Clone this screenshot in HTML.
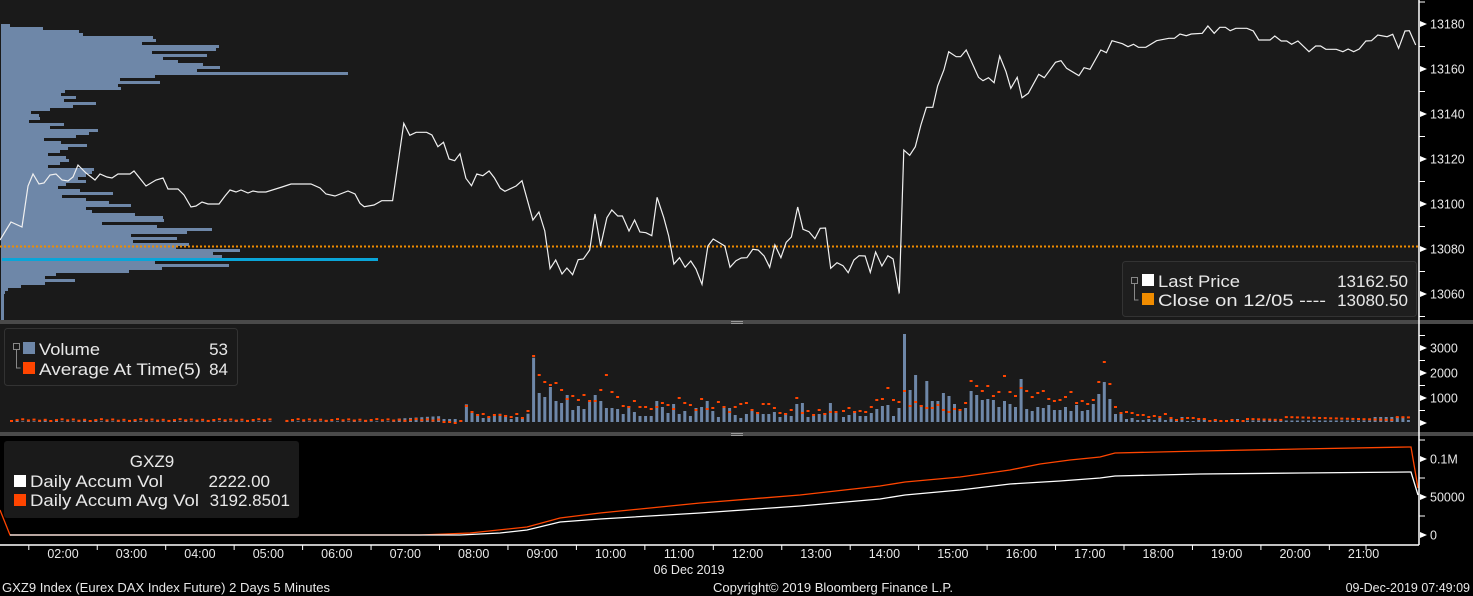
<!DOCTYPE html><html><head><meta charset="utf-8"><style>
body{margin:0;background:#000;width:1473px;height:596px;overflow:hidden;font-family:"Liberation Sans",sans-serif;color:#eee}
svg{position:absolute;left:0;top:0}
text{font-family:"Liberation Sans",sans-serif;fill:#e8e8e8}
</style></head><body>
<svg id="s" width="1473" height="596" xmlns="http://www.w3.org/2000/svg">
<rect x="0" y="0" width="1473" height="596" fill="#000"/>
<rect x="0" y="0" width="1419" height="320" fill="#1a1a1a"/>
<rect x="0" y="324" width="1419" height="108" fill="#1a1a1a"/>
<rect x="0" y="320" width="1473" height="4" fill="#4a4a4a"/>
<rect x="0" y="432" width="1473" height="4" fill="#4a4a4a"/>
<rect x="731" y="321" width="12" height="1" fill="#999"/><rect x="731" y="323" width="12" height="1" fill="#999"/>
<rect x="731" y="433" width="12" height="1" fill="#999"/><rect x="731" y="435" width="12" height="1" fill="#999"/>
<g id="hist" fill="#6e87a8"></g>
<rect x="2" y="258" width="376" height="3" fill="#0aa5d8"/>
<line x1="0" y1="246.5" x2="1419" y2="246.5" stroke="#f08c00" stroke-width="2" stroke-dasharray="2,2"/>
<path id="price" fill="none" stroke="#f0f0f0" stroke-width="1.2"/>
<g id="vol"></g>
<path id="acc1" fill="none" stroke="#ff4500" stroke-width="1.3"/>
<path id="acc2" fill="none" stroke="#ffffff" stroke-width="1.3"/>
<line x1="1419" y1="0" x2="1419" y2="545" stroke="#fff" stroke-width="1.5"/>
<line x1="0" y1="545" x2="1419" y2="545" stroke="#fff" stroke-width="1.5"/>
<g id="axes" font-size="12.5"></g>
<!-- main legend -->
<rect x="1122.5" y="261.5" width="294" height="55" rx="3" fill="#1e1e1e" stroke="#333"/>
<rect x="1131.5" y="277.5" width="6" height="6" fill="none" stroke="#888"/><path d="M1134.5 284v16h4" stroke="#888" fill="none"/>
<rect x="1142" y="274" width="12" height="12" fill="#fff"/><rect x="1142" y="293" width="12" height="12" fill="#f08c00"/>
<text x="1158" y="287" font-size="17" textLength="82" lengthAdjust="spacingAndGlyphs">Last Price</text><text x="1408" y="287" font-size="17" text-anchor="end">13162.50</text>
<text x="1158" y="306" font-size="17" textLength="168" lengthAdjust="spacingAndGlyphs">Close on 12/05 ----</text><text x="1408" y="306" font-size="17" text-anchor="end">13080.50</text>
<!-- vol legend -->
<rect x="4.5" y="328.5" width="233" height="57" rx="3" fill="#1a1a1a" stroke="#333"/>
<rect x="13.5" y="343.5" width="6" height="6" fill="none" stroke="#888"/><path d="M16.5 350v18h4" stroke="#888" fill="none"/>
<rect x="23" y="342" width="12" height="12" fill="#6e87a8"/><rect x="23" y="362" width="12" height="12" fill="#ff4500"/>
<text x="39" y="355" font-size="17" textLength="61" lengthAdjust="spacingAndGlyphs">Volume</text><text x="228" y="355" font-size="17" text-anchor="end">53</text>
<text x="39" y="375" font-size="17" textLength="162" lengthAdjust="spacingAndGlyphs">Average At Time(5)</text><text x="228" y="375" font-size="17" text-anchor="end">84</text>
<!-- accum legend -->
<rect x="4" y="441" width="295" height="77" rx="3" fill="#1a1a1a"/>
<text x="152" y="467" font-size="17" text-anchor="middle">GXZ9</text>
<rect x="14" y="475" width="12" height="12" fill="#fff"/><rect x="14" y="494" width="12" height="12" fill="#ff4500"/>
<text x="30" y="487" font-size="17" textLength="133" lengthAdjust="spacingAndGlyphs">Daily Accum Vol</text><text x="270" y="487" font-size="17" text-anchor="end">2222.00</text>
<text x="30" y="506" font-size="17" textLength="169" lengthAdjust="spacingAndGlyphs">Daily Accum Avg Vol</text><text x="290" y="506" font-size="17" text-anchor="end">3192.8501</text>
<text x="689" y="574" font-size="12.5" text-anchor="middle">06 Dec 2019</text>
<text x="2" y="592" font-size="12.5" textLength="328" lengthAdjust="spacingAndGlyphs">GXZ9 Index (Eurex DAX Index Future) 2 Days 5 Minutes</text>
<text x="713" y="592" font-size="12.5" textLength="240" lengthAdjust="spacingAndGlyphs">Copyright© 2019 Bloomberg Finance L.P.</text>
<text x="1470" y="592" font-size="12.5" text-anchor="end">09-Dec-2019 07:49:09</text>
</svg>
<script>
var NS="http://www.w3.org/2000/svg";
function el(p,t,a,txt){var e=document.createElementNS(NS,t);for(var k in a)e.setAttribute(k,a[k]);if(txt)e.textContent=txt;document.getElementById(p).appendChild(e);return e;}
var hw=[9,42,78,82,152,155,141,218,215,151,206,162,177,202,219,196,347,154,119,159,117,120,64,60,75,63,95,72,49,30,38,39,28,63,49,97,88,75,43,60,86,67,59,47,65,68,59,47,93,91,85,77,85,65,57,79,112,61,85,108,130,85,91,134,162,163,101,156,211,186,130,176,132,188,175,239,212,221,243,154,228,161,128,55,44,74,44,20,7,4];
for(var i=0;i<hw.length;i++)el("hist","rect",{x:1,y:24+i*3,width:hw[i],height:3});
el("hist","rect",{x:1,y:24,width:3,height:296});
var p=[[0,240],[11,222],[22,227],[28,186],[33,174],[39,184],[44,183],[50,175],[56,174],[62,180],[68,181],[73,177],[78,165],[86,173],[95,180],[100,174],[107,177],[112,178],[118,174],[130,174],[134,171],[146,186],[156,180],[163,178],[168,189],[178,189],[184,195],[191,207],[196,206],[202,202],[208,204],[219,204],[225,196],[230,190],[236,192],[241,190],[248,193],[253,191],[258,192],[266,192],[282,187],[291,184],[311,184],[320,188],[326,194],[335,196],[348,191],[355,194]];
var z4=[[0,280],[12,290],[40,285],[62,272],[93,272],[125,40],[142,76],[160,67],[190,67],[205,75],[222,110],[238,97],[254,147],[270,152],[285,131],[302,205],[318,227],[333,192],[350,197],[368,183],[383,203],[400,235],[413,244],[445,228],[462,212],[493,330],[510,306],[527,363],[542,476],[558,450],[576,492],[590,474],[606,494],[622,449],[637,447],[655,420],[670,312],[686,408],[704,323],[718,300],[735,318],[748,318],[767,363],[783,330],[798,366],[815,368],[832,377],[847,262],[866,323],[880,378],[895,462],[911,443],[927,472],[943,453],[958,477],[975,523],[992,408],[1007,387],[1040,408],[1055,472],[1072,452],[1087,444],[1103,443],[1120,418],[1135,420],[1152,438],[1168,472],[1183,405],[1200,443],[1215,397],[1230,381],[1248,291],[1263,358],[1280,365],[1297,386],[1312,355],[1327,354],[1342,475],[1360,458],[1377,467],[1392,488],[1408,450],[1423,437],[1440,438],[1455,487],[1470,426],[1488,468],[1505,437],[1520,447],[1537,548]];
z4.forEach(function(q){p.push([360+q[0]/2.851,110+q[1]/3]);});
var z5=[[25,832],[37,405],[53,421],[68,395],[83,330],[98,277],[115,277],[128,213],[145,165],[158,110],[178,125],[190,125],[205,105],[238,187],[250,197],[265,188],[280,203],[295,123],[312,170],[325,220],[342,187],[355,248],[372,235],[400,178],[415,188],[445,142],[460,137],[475,160],[508,182],[522,158],[538,163],[567,105],[582,113],[597,77],[625,86],[640,95],[655,88],[668,97],[688,97],[717,77],[750,70],[765,70],[780,57],[797,62],[810,57],[840,55],[855,33],[872,55],[887,37],[902,37],[915,47],[930,40],[960,40],[977,48],[992,75],[1022,75],[1035,63],[1052,78],[1067,78],[1080,88],[1097,78],[1127,110],[1145,93],[1158,93],[1172,103],[1200,103],[1218,110],[1232,102],[1247,110],[1262,102],[1280,78],[1295,77],[1312,60],[1337,65],[1352,58],[1368,100],[1385,48],[1397,47],[1414,90]];
z5.forEach(function(q){p.push([890+q[0]/2.6895,15+q[1]/3]);});
document.getElementById("price").setAttribute("d","M"+p.map(function(q){return q[0].toFixed(1)+" "+q[1].toFixed(1)}).join("L"));
var B=422;
function bar(x,h,r){if(h>0)el("vol","rect",{x:x.toFixed(1),y:(B-h).toFixed(1),width:3,height:h.toFixed(1),fill:"#6e87a8"});if(r!==null)el("vol","rect",{x:x.toFixed(1),y:(r).toFixed(1),width:3,height:2,fill:"#ff4500"});}
for(var x=10;x<440;x+=5.62){var h=(x>395)?3+((x*7)%3):((x*13)%7<2?2:0.7);var gap=(x>270&&x<282);bar(x,gap?0:h,gap?null:B-2-((x*3)%2));}
var b6=[282,282,282,286,238,258,268,279,276,272,266,270,282,276,280,266,98,204,216,186,228,234,210,255,243,252,231,210,228,249,249,252,267,243,261,273,273,273,228,246,264,237,267,258,273,249,246,228,258,276,249,249,270,279,267,258,261,267,267,261,276,264,273,237,234,276,273,267,264,234,264];
var r6=[288,288,291,285,240,258,267,264,273,267,267,270,273,264,276,255,90,147,168,177,171,192,219,210,222,207,225,225,192,147,198,213,240,243,225,243,243,249,243,231,237,249,216,231,237,252,219,249,246,228,243,258,243,234,231,252,261,234,234,246,261,264,252,216,261,255,267,252,264,258,258];
for(var i=0;i<b6.length;i++)bar(442.5+i*5.6,(291-b6[i])/3,325+r6[i]/3);
var b7=[276,270,258,273,273,264,252,243,240,273,249,27,195,150,240,168,228,228,204,213,237,258,249,198,210,225,222,225,246,228,237,246,162,252,258,246,249,240,255,255,246,258,240,258,255,237,207,171,222,267,267,282,279,285,285,282,285,279,285,276,285,276,288,288,285,282,285,285,288,288,288,282,288];
var r7=[255,246,258,255,258,243,222,219,186,222,228,195,240,228,240,246,246,237,252,258,249,252,231,165,180,195,180,210,198,150,198,210,186,195,213,201,195,219,225,222,213,198,231,225,234,222,168,108,174,243,261,258,261,267,267,273,270,273,264,276,282,279,276,276,279,279,285,282,285,285,282,285,285];
for(var i=0;i<b7.length;i++)bar(842+i*5.55,(291-b7[i])/3,325+r7[i]/3);
for(var x=1246;x<1412;x+=5.55){var h=x>1370?(x>1405?2:5):1.5;bar(x,h,B-3-((x*7)%3));}
var o=[[0,510],[10,535],[420,535],[470,533],[527,527],[560,518],[600,513],[700,503],[800,495],[880,486],[905,482],[960,477],[1010,470],[1040,464],[1070,460],[1100,457],[1115,453],[1200,451],[1300,449],[1408,447],[1411,447],[1418,488]];
var w=[[10,535],[460,535],[500,533],[527,530],[560,522],[600,519],[700,513],[800,506],[880,499],[905,495],[960,490],[1010,484],[1060,481],[1100,478],[1115,476],[1200,474],[1300,473],[1408,472],[1411,472],[1418,495]];
document.getElementById("acc1").setAttribute("d","M"+o.map(function(q){return q.join(" ")}).join("L"));
document.getElementById("acc2").setAttribute("d","M"+w.map(function(q){return q.join(" ")}).join("L"));
function tri(y){el("axes","path",{d:"M1420 "+(y-3)+"L1427 "+y+"L1420 "+(y+3)+"Z",fill:"#fff"});}
var pl=[13180,13160,13140,13120,13100,13080,13060];
for(var i=0;i<pl.length;i++){var y=24+i*45;tri(y);el("axes","text",{x:1430,y:y+4.5},pl[i]);el("axes","line",{x1:1419,y1:y+22.5,x2:1425,y2:y+22.5,stroke:"#fff"});}
el("axes","line",{x1:1419,y1:2,x2:1425,y2:2,stroke:"#fff"});
var vl=[[3000,348],[2000,373],[1000,398],[0,423]];
vl.forEach(function(v){tri(v[1]);el("axes","text",{x:1430,y:v[1]+4.5},v[0]);el("axes","line",{x1:1419,y1:v[1]-12.5,x2:1425,y2:v[1]-12.5,stroke:"#fff"});});
var al=[["0.1M",459],["50000",497],["0",535]];
al.forEach(function(v){tri(v[1]);el("axes","text",{x:1430,y:v[1]+4.5},v[0]);el("axes","line",{x1:1419,y1:v[1]-19,x2:1425,y2:v[1]-19,stroke:"#fff"});});
for(var h=2;h<=21;h++){var x=63+(h-2)*68.45;el("axes","text",{x:x,y:558,"text-anchor":"middle"},(h<10?"0":"")+h+":00");el("axes","line",{x1:x-34.2,y1:545,x2:x-34.2,y2:550,stroke:"#fff"});}
el("axes","line",{x1:1366,y1:545,x2:1366,y2:550,stroke:"#fff"});
</script>
</body></html>
